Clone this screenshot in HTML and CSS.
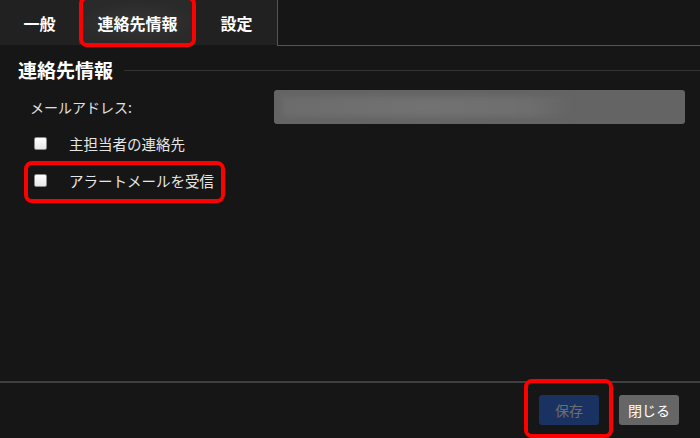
FILE: index.html
```html
<!DOCTYPE html>
<html lang="ja">
<head>
<meta charset="UTF-8">
<meta name="viewport" content="width=device-width, initial-scale=1.0">
<title>連絡先情報</title>
<link rel="stylesheet" href="styles.css">
</head>
<body>

<div class="dialog">
  <div class="tabs">
    <div class="tab">一般</div>
    <div class="tab active marked">連絡先情報</div>
    <div class="tab">設定</div>
    <div class="tabs-rest"></div>
  </div>

  <div class="content">
    <div class="section-title">
      <span>連絡先情報</span>
      <div class="rule"></div>
    </div>

    <div class="form-row">
      <label class="field-label">メールアドレス:</label>
      <div class="email-field"><span class="blur"></span></div>
    </div>

    <div class="check-row">
      <input type="checkbox" id="primaryContact">
      <label for="primaryContact">主担当者の連絡先</label>
    </div>
    <div class="check-row marked-row">
      <input type="checkbox" id="alertMail">
      <label for="alertMail">アラートメールを受信</label>
    </div>
  </div>

  <div class="footer">
    <button class="btn btn-save marked-btn" disabled>保存</button>
    <button class="btn btn-close">閉じる</button>
  </div>
</div>

</body>
</html>
```

FILE: styles.css
```css
body {
  margin: 0;
  background-color: #161616;
  font-family: "Noto Sans CJK JP", "Noto Sans", sans-serif;
  color: #e6e6e6;
}

.dialog {
  height: 438px;
  display: flex;
  flex-direction: column;
}

/* tab strip */
.tabs {
  display: flex;
  height: 46px;
}

.tab {
  position: relative;
  height: 45px;
  background-color: #212121;
  color: #fff;
  font-size: 16px;
  font-weight: bold;
  line-height: 47px;
  text-align: center;
}

.tab:nth-child(1) { width: 79px; }
.tab:nth-child(2) { width: 117px; }
.tab:nth-child(3) { width: 81px; }

.tab.active {
  background: radial-gradient(ellipse at center, #363636 0%, #2a2a2a 70%);
}

.tabs-rest {
  flex: 1;
  height: 45px;
  border-left: 1px solid #555;
  border-bottom: 1px solid #555;
}

/* red annotation frames */
.marked::after,
.marked-row::after,
.marked-btn::after {
  content: "";
  position: absolute;
  border: 4px solid #ff0000;
  border-radius: 8px;
  pointer-events: none;
}

.marked::after {
  top: -4px;
  left: 0;
  right: 0;
  bottom: -2px;
}

.content {
  flex: 1;
  padding: 11px 0 0 18px;
}

.section-title {
  display: flex;
  align-items: center;
  gap: 11px;
  font-size: 19px;
  font-weight: bold;
  color: #fff;
  line-height: 26px;
}

.section-title .rule {
  flex: 1;
  height: 1px;
  background-color: #333;
}

.form-row {
  display: flex;
  align-items: center;
  margin-top: 7px;
  padding-left: 12px;
}

.field-label {
  width: 244px;
  font-size: 14px;
  color: #e0e0e0;
}

.email-field {
  width: 411px;
  height: 34px;
  border-radius: 3px;
  background-color: #646464;
  display: flex;
  align-items: center;
  padding-left: 8px;
  box-sizing: border-box;
  overflow: hidden;
}

.email-field .blur {
  display: block;
  width: 290px;
  height: 20px;
  background: linear-gradient(90deg, #6c6c6c, #727272 50%, #6e6e6e 85%, #646464);
  filter: blur(3px);
}

.check-row {
  position: relative;
  display: flex;
  align-items: center;
  height: 37px;
  padding-left: 16px;
  width: 191px;
  font-size: 14.5px;
  color: #e6e6e6;
}

.form-row + .check-row {
  margin-top: 1px;
}

.check-row input {
  appearance: none;
  width: 13px;
  height: 13px;
  margin: 0 22px 0 0;
  border: 1px solid #8a8a8a;
  border-radius: 2px;
  background: linear-gradient(#ffffff, #e8e8e8);
}

.check-row label {
  line-height: 20px;
}

.marked-row::after {
  top: -1px;
  left: 6px;
  right: 0;
  bottom: -4px;
}

/* footer */
.footer {
  height: 57px;
  border-top: 2px solid #3f3f3f;
  display: flex;
  justify-content: flex-end;
  align-items: flex-start;
  gap: 20px;
  padding: 12px 21px 0 0;
  box-sizing: border-box;
}

.btn {
  position: relative;
  width: 60px;
  height: 30px;
  border: none;
  border-radius: 3px;
  font-family: inherit;
  font-size: 14px;
  padding: 0;
}

.btn-save {
  background-color: #1a3262;
  color: #6e6e6e;
}

.btn-close {
  background-color: #666;
  color: #fff;
}

.marked-btn::after {
  top: -16px;
  left: -15px;
  right: -14px;
  bottom: -13px;
}
```
